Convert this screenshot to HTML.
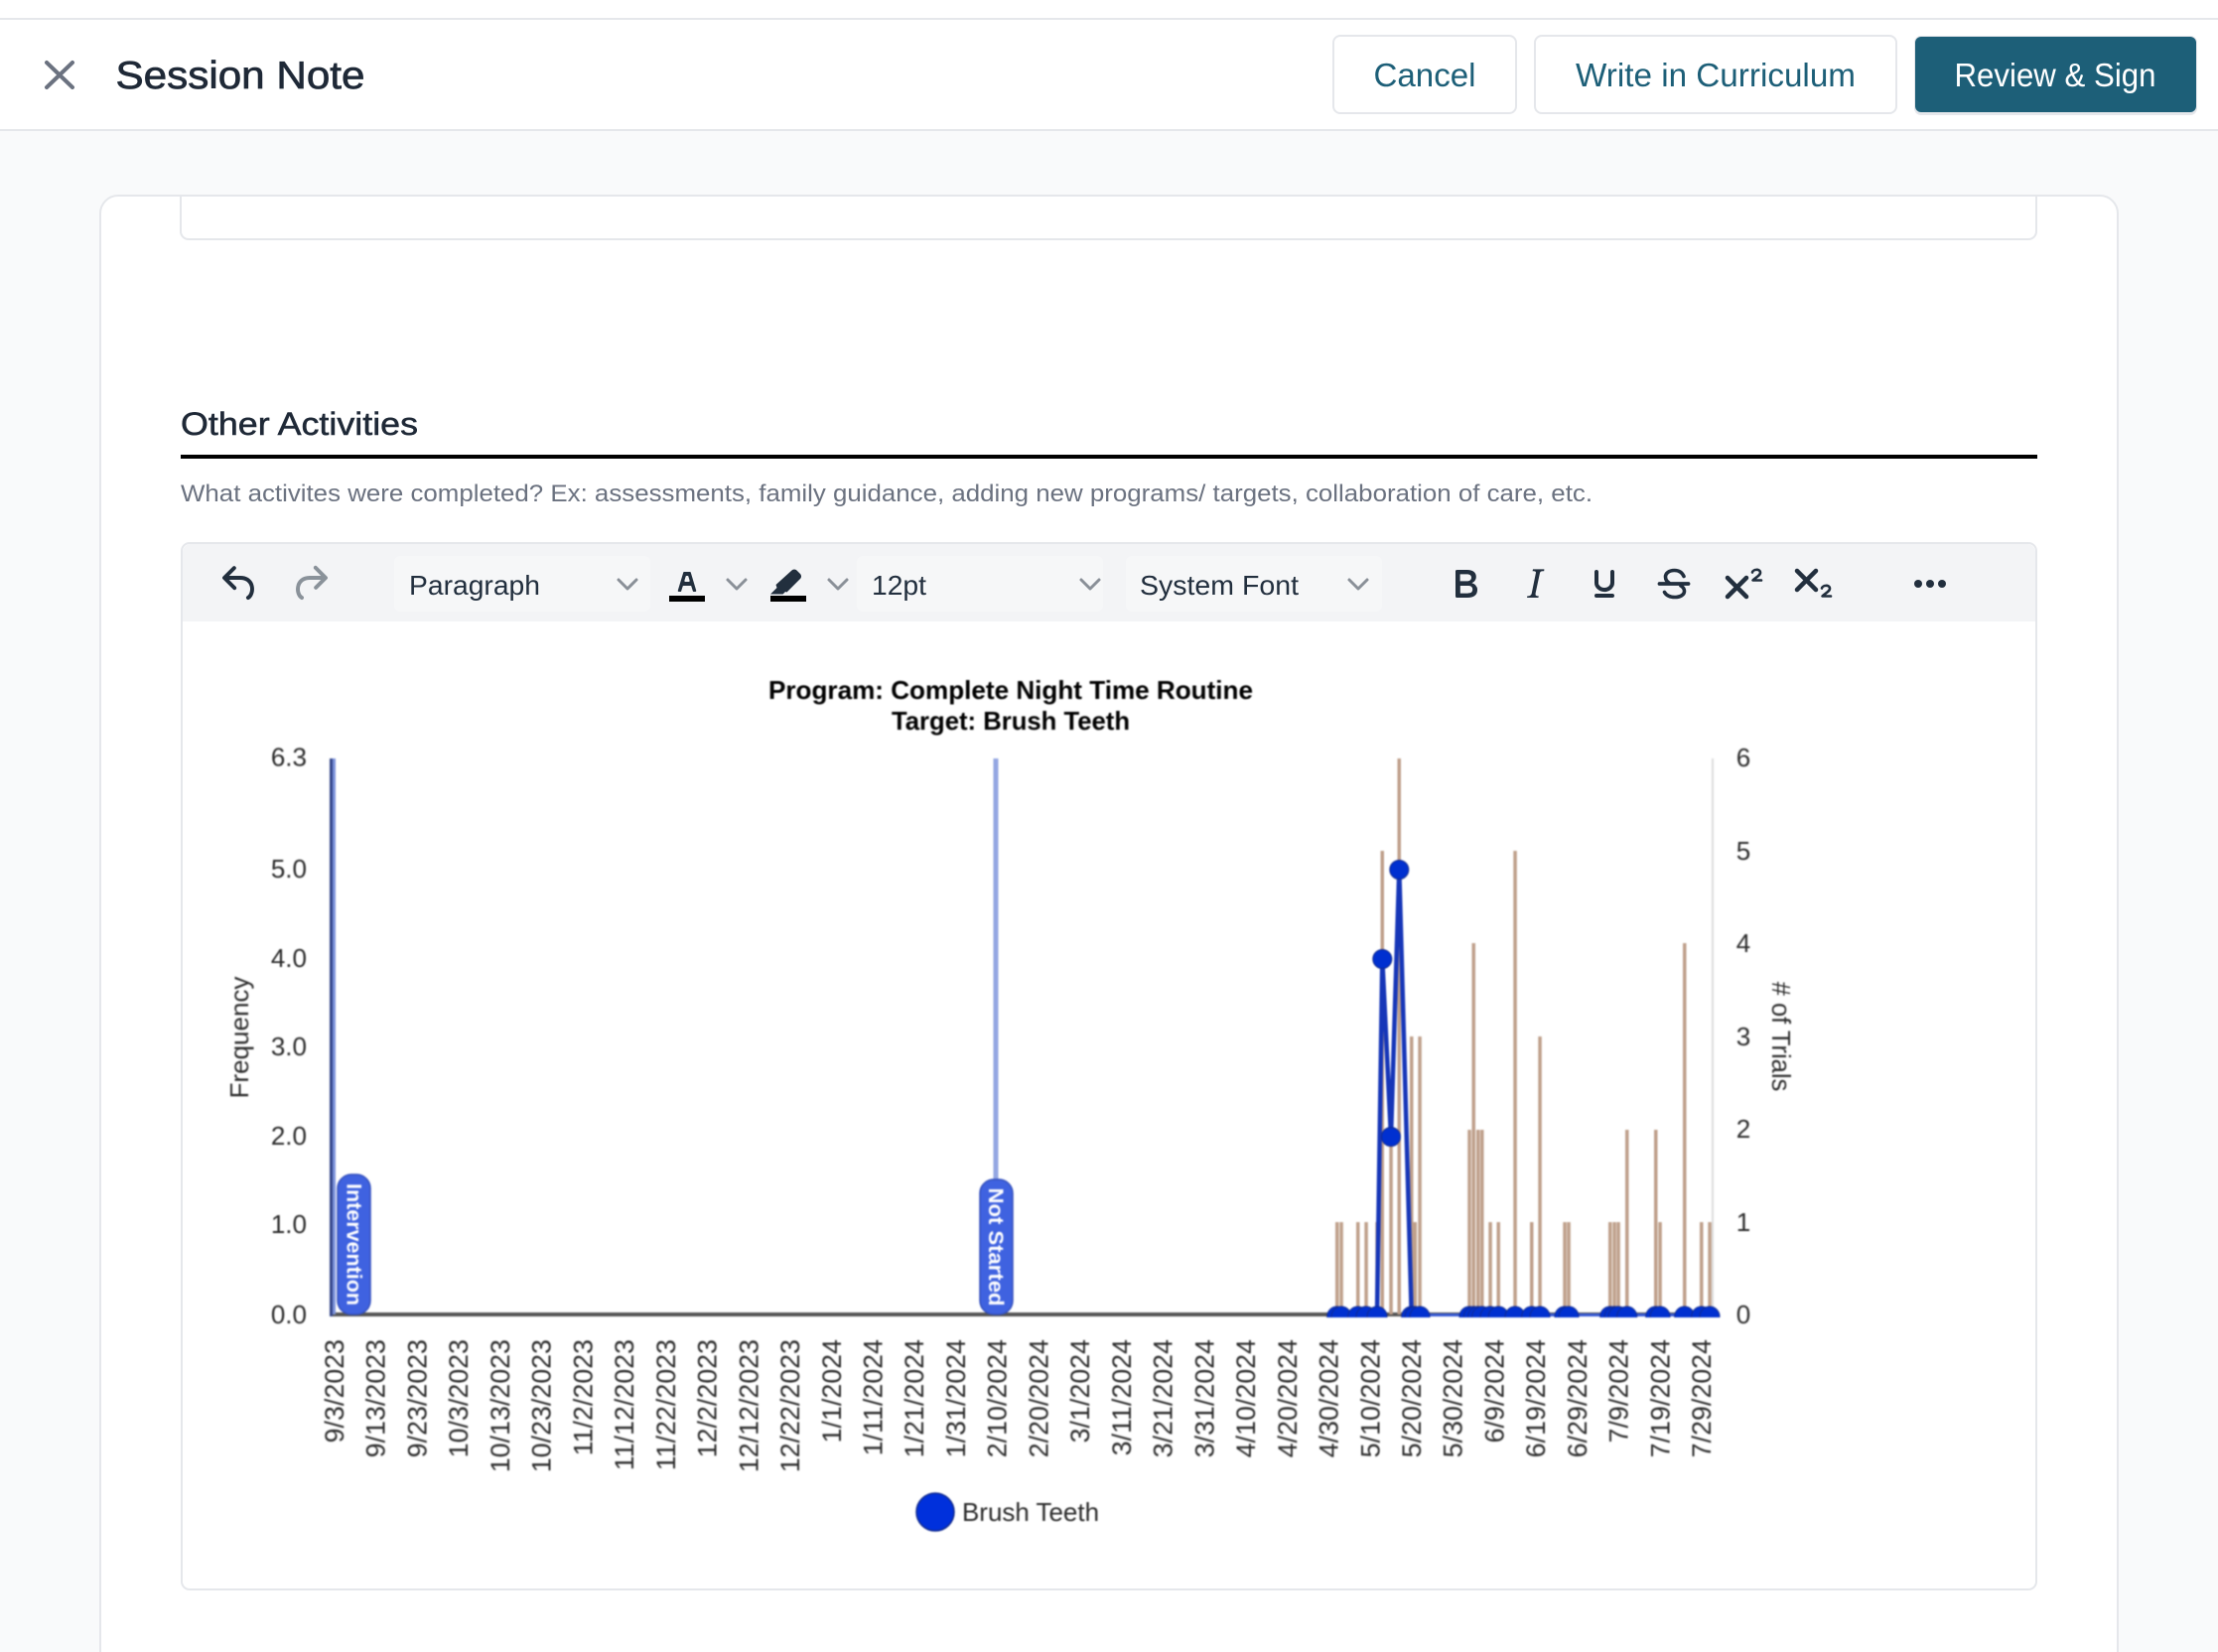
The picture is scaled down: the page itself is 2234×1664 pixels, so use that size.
<!DOCTYPE html>
<html lang="en">
<head>
<meta charset="utf-8">
<title>Session Note</title>
<style>
html,body{margin:0;padding:0;background:#f9fafb;width:2234px;height:1664px;overflow:hidden}
svg{display:block}
text{font-family:"Liberation Sans",sans-serif}
.chart text{fill:#2b2b2b;font-size:26px}
</style>
</head>
<body>
<svg width="2234" height="1664" viewBox="0 0 2234 1664" xmlns="http://www.w3.org/2000/svg">
<defs>
<clipPath id="zero"><rect x="1300" y="1300" width="440" height="27"/></clipPath>
<clipPath id="cardclip"><rect x="102" y="198" width="2030" height="1480"/></clipPath>
</defs>

<!-- page + header -->
<rect width="2234" height="1664" fill="#f9fafb"/>
<rect width="2234" height="131" fill="#fff"/>
<rect y="18" width="2234" height="2" fill="#e5e7eb"/>
<rect y="130" width="2234" height="2" fill="#e5e7eb"/>
<path d="M47 63L73 88M73 63L47 88" stroke="#6b7280" stroke-width="4" fill="none" stroke-linecap="round"/>
<text x="116.500" y="89" font-size="39" fill="#1f2937" stroke="#1f2937" stroke-width=".7" textLength="251" lengthAdjust="spacingAndGlyphs">Session Note</text>

<rect x="1343" y="36" width="184" height="78" rx="7" fill="#fff" stroke="#e5e7eb" stroke-width="2"/>
<text x="1383.500" y="87" font-size="33" fill="#1d5f78" textLength="103" lengthAdjust="spacingAndGlyphs">Cancel</text>
<rect x="1546" y="36" width="364" height="78" rx="7" fill="#fff" stroke="#e5e7eb" stroke-width="2"/>
<text x="1587" y="87" font-size="33" fill="#1d5f78" textLength="282" lengthAdjust="spacingAndGlyphs">Write in Curriculum</text>
<rect x="1928" y="36" width="285" height="80" rx="7" fill="#e5e7eb"/>
<rect x="1929" y="37" width="283" height="76" rx="6" fill="#1d5f78"/>
<text x="1968.500" y="87" font-size="33" fill="#fff" textLength="203" lengthAdjust="spacingAndGlyphs">Review &amp; Sign</text>

<!-- card -->
<rect x="101" y="197" width="2032" height="1520" rx="18" fill="#fff" stroke="#e5e7eb" stroke-width="2"/>
<g clip-path="url(#cardclip)">
<rect x="182" y="170" width="1869" height="71" rx="8" fill="#fff" stroke="#e5e7eb" stroke-width="2"/>
</g>

<text x="182" y="438" font-size="32" fill="#1f2937" stroke="#1f2937" stroke-width=".5" textLength="239" lengthAdjust="spacingAndGlyphs">Other Activities</text>
<rect x="182" y="458" width="1870" height="4" fill="#000"/>
<text x="182" y="505" font-size="24" fill="#6b7280" textLength="1422" lengthAdjust="spacingAndGlyphs">What activites were completed? Ex: assessments, family guidance, adding new programs/ targets, collaboration of care, etc.</text>

<!-- editor -->
<rect x="183" y="547" width="1868" height="1054" rx="8" fill="#fff" stroke="#e5e7eb" stroke-width="2"/>
<path d="M184 626V556a8 8 0 0 1 8-8H2042a8 8 0 0 1 8 8V626Z" fill="#f3f4f6"/>

<!-- toolbar icons -->
<g fill="#222f3e">
<g transform="translate(218 564) scale(2)"><path d="M6.4 8H12c3.7 0 6.2 2 6.8 5.1.6 2.7-.4 5.6-2.3 6.8a1 1 0 0 1-1-1.8c1.1-.7 1.8-2.7 1.4-4.6-.5-2.1-2.1-3.5-4.9-3.5H6.4l3.3 3.3a1 1 0 1 1-1.4 1.4l-5-5a1 1 0 0 1 0-1.4l5-5a1 1 0 0 1 1.4 1.4L6.4 8Z"/></g>
<g transform="translate(288 564) scale(2)" opacity=".5"><path d="M17.6 10H12c-2.8 0-4.4 1.4-4.9 3.5-.4 2 .3 4 1.4 4.6a1 1 0 1 1-1 1.8c-2-1.2-2.9-4.1-2.3-6.8.6-3 3-5.1 6.8-5.1h5.6l-3.3-3.3a1 1 0 1 1 1.4-1.4l5 5a1 1 0 0 1 0 1.4l-5 5a1 1 0 0 1-1.4-1.4l3.3-3.3Z"/></g>
<g transform="translate(1452 564) scale(2)"><path d="M7.8 19c-.3 0-.5 0-.6-.2l-.2-.5V5.7c0-.2 0-.4.2-.5l.6-.2h5c1.5 0 2.7.3 3.5 1 .7.6 1.1 1.4 1.1 2.5a3 3 0 0 1-.6 1.9c-.4.6-1 1-1.6 1.2.4.1.9.3 1.3.6s.8.7 1 1.2c.4.4.5 1 .5 1.6 0 1.3-.4 2.3-1.3 3-.8.7-2.1 1-3.8 1H7.8Zm5-8.3c.6 0 1.2-.1 1.6-.5.4-.3.6-.7.6-1.3 0-1.1-.8-1.7-2.3-1.7H9.3v3.5h3.4Zm.5 6c.7 0 1.3-.1 1.7-.4.4-.4.6-.9.6-1.5s-.2-1-.7-1.4c-.4-.3-1-.4-2-.4H9.4v3.8h4Z"/></g>
<g transform="translate(1522 564) scale(2)"><path d="M16.7 4.7l-.1.9h-.3c-.6 0-1 0-1.4.3-.3.3-.4.6-.5 1.1l-2.1 9.8v.6c0 .5.4.8 1.4.8h.2l-.2.8H8l.2-.8h.2c1.1 0 1.8-.5 2-1.5l2-9.8.1-.5c0-.6-.4-.8-1.4-.8h-.3l.2-.9h5.8Z"/></g>
<g transform="translate(1592 564) scale(2)"><path d="M16 5c.6 0 1 .4 1 1v5.5a4 4 0 0 1-.4 1.8l-1 1.4a5.3 5.3 0 0 1-5.5 1 5 5 0 0 1-1.6-1c-.5-.4-.8-.9-1.1-1.4a4 4 0 0 1-.4-1.8V6c0-.6.4-1 1-1s1 .4 1 1v5.5c0 .3 0 .6.2 1l.6.7a3.3 3.3 0 0 0 2.2.8 3.4 3.4 0 0 0 2.2-.8c.3-.2.4-.5.6-.8l.2-.9V6c0-.6.4-1 1-1ZM8 17h8c.6 0 1 .4 1 1s-.4 1-1 1H8a1 1 0 0 1 0-2Z"/></g>
<circle cx="1932" cy="588" r="4"/><circle cx="1944" cy="588" r="4"/><circle cx="1956" cy="588" r="4"/>
<!-- text colour A -->
<g transform="translate(668 564) scale(2)"><path d="M8.7 16h-.8a.5.5 0 0 1-.5-.6l2.7-9c.1-.3.3-.4.5-.4h2.8c.2 0 .4.1.5.4l2.7 9a.5.5 0 0 1-.5.6h-.8a.5.5 0 0 1-.4-.4l-.7-2.2c0-.3-.3-.4-.5-.4h-3.4c-.2 0-.4.1-.5.4l-.7 2.2c0 .3-.2.4-.4.4Zm2.6-7.6-.6 2a.5.5 0 0 0 .5.6h1.6a.5.5 0 0 0 .5-.6l-.6-2c0-.3-.3-.4-.5-.4h-.4c-.2 0-.4.1-.5.4Z"/></g>
<!-- highlighter -->
<path d="M797.500 574.500a3.500 3.500 0 0 1 5 0l3.500 3.500a3.500 3.500 0 0 1 0 5L792.500 596.500l-1.500-.5-2.500 2.500H776l6.500-6.500-1-3Z"/>
</g>
<rect x="674" y="600" width="36" height="6" fill="#000"/>
<rect x="776" y="600" width="36" height="6" fill="#000"/>

<!-- strike, sup, sub -->
<g fill="none" stroke="#222f3e" stroke-linecap="round" stroke-linejoin="round">
<path d="M1696 580.500C1694 576 1690 574.500 1686.500 574.500C1681 574.500 1677.500 577.500 1677.500 581C1677.500 583.500 1678.500 585.500 1681 587" stroke-width="3.600"/>
<path d="M1693 590C1695.500 591.500 1696.500 593.500 1696.500 595.500C1696.500 599 1692.500 601.500 1687 601.500C1682.500 601.500 1678.500 600 1676.500 596.500" stroke-width="3.600"/>
<path d="M1671.500 588H1700.500" stroke-width="3.800"/>
<path d="M1740 582L1759 601M1759 582L1740 601" stroke-width="4.500"/>
<path d="M1765 576.500c.5-3 7.500-4 8 0 .3 3-4.500 5-7.500 8H1774" stroke-width="2.600"/>
<path d="M1810 575L1829 594M1829 575L1810 594" stroke-width="4.500"/>
<path d="M1835 592.500c.5-3 7.500-4 8 0 .3 3-4.500 5-7.500 8H1844" stroke-width="2.600"/>
</g>

<!-- selects -->
<g fill="#f6f7f8">
<rect x="397" y="560" width="258" height="56" rx="6"/>
<rect x="863" y="560" width="248" height="56" rx="6"/>
<rect x="1134" y="560" width="258" height="56" rx="6"/>
</g>
<g font-size="28" fill="#222f3e">
<text x="412" y="599" textLength="132" lengthAdjust="spacingAndGlyphs">Paragraph</text>
<text x="878" y="599" textLength="55" lengthAdjust="spacingAndGlyphs">12pt</text>
<text x="1148" y="599" textLength="160" lengthAdjust="spacingAndGlyphs">System Font</text>
</g>
<g fill="none" stroke="#8a9098" stroke-width="3" stroke-linecap="round" stroke-linejoin="round">
<path d="M623 584l9 9 9-9"/>
<path d="M733 584l9 9 9-9"/>
<path d="M835 584l9 9 9-9"/>
<path d="M1089 584l9 9 9-9"/>
<path d="M1359 584l9 9 9-9"/>
</g>

<!-- chart -->
<g class="chart" style="filter:blur(.9px)">
<text x="774" y="704" font-weight="bold" style="font-size:26px;fill:#000" textLength="488" lengthAdjust="spacingAndGlyphs">Program: Complete Night Time Routine</text>
<text x="898" y="735" font-weight="bold" style="font-size:26px;fill:#000" textLength="240" lengthAdjust="spacingAndGlyphs">Target: Brush Teeth</text>

<g text-anchor="end">
<text x="309" y="771.500">6.3</text>
<text x="309" y="884">5.0</text>
<text x="309" y="974">4.0</text>
<text x="309" y="1063">3.0</text>
<text x="309" y="1153">2.0</text>
<text x="309" y="1242">1.0</text>
<text x="309" y="1333">0.0</text>
</g>
<text transform="translate(250 1045) rotate(-90)" text-anchor="middle">Frequency</text>

<g text-anchor="middle">
<text x="1756" y="772">6</text>
<text x="1756" y="866">5</text>
<text x="1756" y="959">4</text>
<text x="1756" y="1053">3</text>
<text x="1756" y="1146">2</text>
<text x="1756" y="1240">1</text>
<text x="1756" y="1333">0</text>
</g>
<text transform="translate(1785 1044) rotate(90)" text-anchor="middle" style="font-size:25.500px">#&#160;of Trials</text>

<!-- axes -->
<rect x="1724" y="764" width="2" height="560" fill="#ddd"/>
<rect x="332" y="1322" width="1394" height="4" fill="#555"/>
<rect x="1421" y="1323" width="305" height="3" fill="#3558d4"/>
<rect x="332" y="764" width="3" height="562" fill="#34468a"/>
<rect x="335" y="764" width="3" height="560" fill="#7d93dc"/>
<rect x="1000.500" y="764" width="5" height="425" fill="#93a6e2"/>

<!-- trials bars -->
<g fill="#bfa08b">
<rect x="1345" y="1231" width="3.500" height="93"/>
<rect x="1349.300" y="1231" width="3.500" height="93"/>
<rect x="1366" y="1231" width="3.500" height="93"/>
<rect x="1374.300" y="1231" width="3.500" height="93"/>
<rect x="1385.300" y="1231" width="3.500" height="93"/>
<rect x="1390.500" y="857" width="3.500" height="467"/>
<rect x="1399.300" y="1138" width="3.500" height="186"/>
<rect x="1407.500" y="764" width="3.500" height="560"/>
<rect x="1420" y="1044" width="3.500" height="280"/>
<rect x="1423.500" y="1231" width="3.500" height="93"/>
<rect x="1428.300" y="1044" width="3.500" height="280"/>
<rect x="1478.300" y="1138" width="3.500" height="186"/>
<rect x="1482.500" y="950" width="3.500" height="374"/>
<rect x="1487" y="1138" width="3.500" height="186"/>
<rect x="1491" y="1138" width="3.500" height="186"/>
<rect x="1499.300" y="1231" width="3.500" height="93"/>
<rect x="1507.500" y="1231" width="3.500" height="93"/>
<rect x="1524.300" y="857" width="3.500" height="467"/>
<rect x="1541" y="1231" width="3.500" height="93"/>
<rect x="1549.300" y="1044" width="3.500" height="280"/>
<rect x="1574.300" y="1231" width="3.500" height="93"/>
<rect x="1578.300" y="1231" width="3.500" height="93"/>
<rect x="1620" y="1231" width="3.500" height="93"/>
<rect x="1624.300" y="1231" width="3.500" height="93"/>
<rect x="1628.300" y="1231" width="3.500" height="93"/>
<rect x="1637" y="1138" width="3.500" height="186"/>
<rect x="1666" y="1138" width="3.500" height="186"/>
<rect x="1670.300" y="1231" width="3.500" height="93"/>
<rect x="1695" y="950" width="3.500" height="374"/>
<rect x="1712" y="1231" width="3.500" height="93"/>
<rect x="1720.300" y="1231" width="3.500" height="93"/>
</g>

<!-- phase flags -->
<rect x="340" y="1183" width="33" height="141" rx="14" fill="#3f62e0" stroke="#3450bd" stroke-width="1.500"/>
<text transform="translate(349.500 1192) rotate(90)" font-weight="bold" style="font-size:21.500px;fill:#fff" textLength="123" lengthAdjust="spacingAndGlyphs">Intervention</text>
<rect x="987" y="1188" width="33" height="136" rx="14" fill="#3f62e0" stroke="#3450bd" stroke-width="1.500"/>
<text transform="translate(996 1196.500) rotate(90)" font-weight="bold" style="font-size:21.500px;fill:#fff" textLength="119" lengthAdjust="spacingAndGlyphs">Not Started</text>

<!-- data line -->
<path d="M1387 1324L1392.300 966L1401 1145L1409.300 876L1421.700 1324" fill="none" stroke="#1636b8" stroke-width="4.500" stroke-linejoin="round"/>

<!-- markers at zero -->
<g clip-path="url(#zero)" fill="#0030d0" stroke="#102a90" stroke-width="1">
<circle cx="1346.700" cy="1326" r="10"/>
<circle cx="1351" cy="1326" r="10"/>
<circle cx="1367.700" cy="1326" r="10"/>
<circle cx="1376" cy="1326" r="10"/>
<circle cx="1387" cy="1326" r="10"/>
<circle cx="1421.700" cy="1326" r="10"/>
<circle cx="1425" cy="1326" r="10"/>
<circle cx="1430" cy="1326" r="10"/>
<circle cx="1480" cy="1326" r="10"/>
<circle cx="1484.300" cy="1326" r="10"/>
<circle cx="1488.700" cy="1326" r="10"/>
<circle cx="1492.700" cy="1326" r="10"/>
<circle cx="1501" cy="1326" r="10"/>
<circle cx="1509.300" cy="1326" r="10"/>
<circle cx="1526" cy="1326" r="10"/>
<circle cx="1542.700" cy="1326" r="10"/>
<circle cx="1551" cy="1326" r="10"/>
<circle cx="1576" cy="1326" r="10"/>
<circle cx="1580" cy="1326" r="10"/>
<circle cx="1621.700" cy="1326" r="10"/>
<circle cx="1626" cy="1326" r="10"/>
<circle cx="1630" cy="1326" r="10"/>
<circle cx="1638.700" cy="1326" r="10"/>
<circle cx="1667.700" cy="1326" r="10"/>
<circle cx="1672" cy="1326" r="10"/>
<circle cx="1696.700" cy="1326" r="10"/>
<circle cx="1713.700" cy="1326" r="10"/>
<circle cx="1722" cy="1326" r="10"/>
</g>
<g fill="#0030d0" stroke="#102a90" stroke-width="1">
<circle cx="1392.300" cy="966" r="9.500"/>
<circle cx="1401" cy="1145" r="9.500"/>
<circle cx="1409.300" cy="876" r="9.500"/>
</g>

<!-- x labels -->
<g text-anchor="end" style="letter-spacing:.15px">
<text transform="translate(346 1349) rotate(-90)" style="font-size:26.500px">9/3/2023</text>
<text transform="translate(387.700 1349) rotate(-90)" style="font-size:26.500px">9/13/2023</text>
<text transform="translate(429.500 1349) rotate(-90)" style="font-size:26.500px">9/23/2023</text>
<text transform="translate(471.200 1349) rotate(-90)" style="font-size:26.500px">10/3/2023</text>
<text transform="translate(512.900 1349) rotate(-90)" style="font-size:26.500px">10/13/2023</text>
<text transform="translate(554.700 1349) rotate(-90)" style="font-size:26.500px">10/23/2023</text>
<text transform="translate(596.400 1349) rotate(-90)" style="font-size:26.500px">11/2/2023</text>
<text transform="translate(638.100 1349) rotate(-90)" style="font-size:26.500px">11/12/2023</text>
<text transform="translate(679.800 1349) rotate(-90)" style="font-size:26.500px">11/22/2023</text>
<text transform="translate(721.600 1349) rotate(-90)" style="font-size:26.500px">12/2/2023</text>
<text transform="translate(763.300 1349) rotate(-90)" style="font-size:26.500px">12/12/2023</text>
<text transform="translate(805 1349) rotate(-90)" style="font-size:26.500px">12/22/2023</text>
<text transform="translate(846.800 1349) rotate(-90)" style="font-size:26.500px">1/1/2024</text>
<text transform="translate(888.500 1349) rotate(-90)" style="font-size:26.500px">1/11/2024</text>
<text transform="translate(930.200 1349) rotate(-90)" style="font-size:26.500px">1/21/2024</text>
<text transform="translate(972 1349) rotate(-90)" style="font-size:26.500px">1/31/2024</text>
<text transform="translate(1013.700 1349) rotate(-90)" style="font-size:26.500px">2/10/2024</text>
<text transform="translate(1055.400 1349) rotate(-90)" style="font-size:26.500px">2/20/2024</text>
<text transform="translate(1097.100 1349) rotate(-90)" style="font-size:26.500px">3/1/2024</text>
<text transform="translate(1138.900 1349) rotate(-90)" style="font-size:26.500px">3/11/2024</text>
<text transform="translate(1180.600 1349) rotate(-90)" style="font-size:26.500px">3/21/2024</text>
<text transform="translate(1222.300 1349) rotate(-90)" style="font-size:26.500px">3/31/2024</text>
<text transform="translate(1264.100 1349) rotate(-90)" style="font-size:26.500px">4/10/2024</text>
<text transform="translate(1305.800 1349) rotate(-90)" style="font-size:26.500px">4/20/2024</text>
<text transform="translate(1347.500 1349) rotate(-90)" style="font-size:26.500px">4/30/2024</text>
<text transform="translate(1389.300 1349) rotate(-90)" style="font-size:26.500px">5/10/2024</text>
<text transform="translate(1431 1349) rotate(-90)" style="font-size:26.500px">5/20/2024</text>
<text transform="translate(1472.700 1349) rotate(-90)" style="font-size:26.500px">5/30/2024</text>
<text transform="translate(1514.400 1349) rotate(-90)" style="font-size:26.500px">6/9/2024</text>
<text transform="translate(1556.200 1349) rotate(-90)" style="font-size:26.500px">6/19/2024</text>
<text transform="translate(1597.900 1349) rotate(-90)" style="font-size:26.500px">6/29/2024</text>
<text transform="translate(1639.600 1349) rotate(-90)" style="font-size:26.500px">7/9/2024</text>
<text transform="translate(1681.400 1349) rotate(-90)" style="font-size:26.500px">7/19/2024</text>
<text transform="translate(1723.100 1349) rotate(-90)" style="font-size:26.500px">7/29/2024</text>
</g>

<!-- legend -->
<circle cx="942" cy="1523" r="19" fill="#0030dc" stroke="#102a90" stroke-width="1.500"/>
<text x="969" y="1532" textLength="138" lengthAdjust="spacingAndGlyphs">Brush Teeth</text>
</g>
</svg>
</body>
</html>
